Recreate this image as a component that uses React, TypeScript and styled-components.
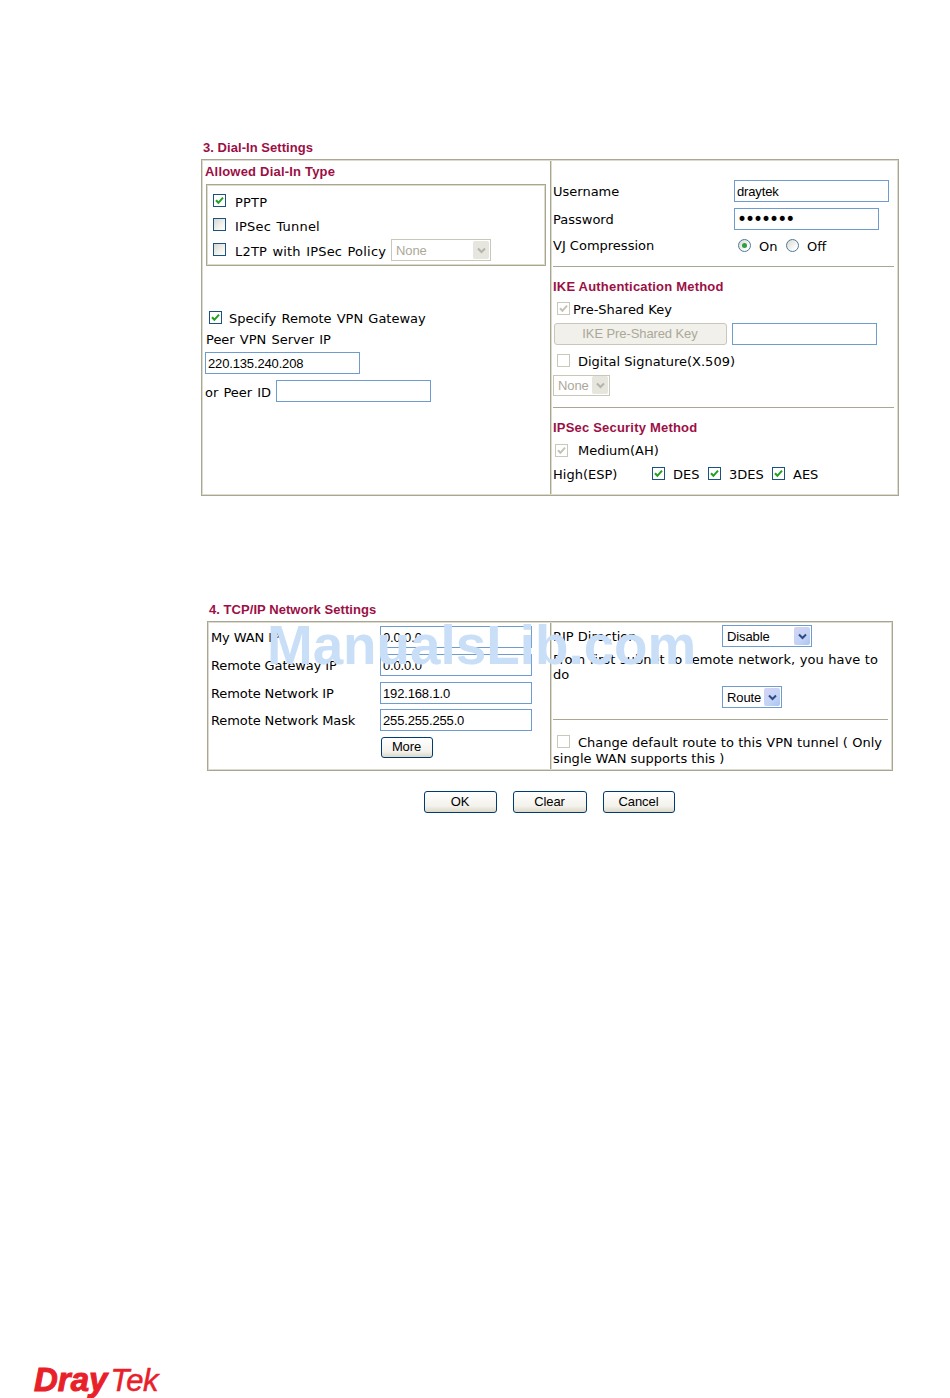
import styled, { createGlobalStyle } from "styled-components";

const GlobalStyle = createGlobalStyle`
  html, body {
    margin: 0;
    padding: 0;
    background: #ffffff;
  }
`;

const labelFont = `"DejaVu Sans", Verdana, sans-serif`;
const fieldFont = `"Liberation Sans", Arial, sans-serif`;
const lineColor = "#a9a78f";

const Page = styled.div`
  position: relative;
  width: 950px;
  height: 1398px;
  overflow: hidden;
  display: flex;
  flex-direction: column;
  padding-top: 138px;
  box-sizing: border-box;
  font-family: ${labelFont};
  font-size: 13px;
  color: #000000;
`;

const Section = styled.section<{ $left: number; $width: number; $top?: number }>`
  margin-left: ${(p) => p.$left}px;
  margin-top: ${(p) => p.$top || 0}px;
  width: ${(p) => p.$width}px;
`;

const Heading = styled.h3<{ $indent: number }>`
  margin: 0 0 2px;
  padding: 1px 0 0 ${(p) => p.$indent}px;
  font: bold 13px/18px ${fieldFont};
  letter-spacing: 0.05px;
  color: #9c0f45;
`;

const Panel = styled.div<{ $height: number; $split: number }>`
  display: grid;
  grid-template-columns: ${(p) => p.$split}px 1fr;
  height: ${(p) => p.$height}px;
  box-sizing: border-box;
  border: 1px solid ${lineColor};
  padding: 1px;
  box-shadow: inset 0 0 0 1px #dcdbd0;
`;

const LeftCell = styled.div`
  box-sizing: border-box;
  border-right: 1px solid ${lineColor};
  box-shadow: 1px 0 0 #dcdbd0;
  word-spacing: 1px;
`;

const RightCell = styled.div`
  padding-left: 2px;
`;

const SubTitle = styled.div<{ $indent?: number; $top?: number }>`
  font: bold 13px/18px ${fieldFont};
  letter-spacing: 0.2px;
  word-spacing: 0;
  color: #9c0f45;
  padding: 2px 0 0 ${(p) => p.$indent || 0}px;
  margin-top: ${(p) => p.$top || 0}px;
`;

const Row = styled.div<{ $h?: number; $top?: number; $indent?: number; $gap?: number }>`
  display: flex;
  align-items: center;
  height: ${(p) => p.$h || 20}px;
  margin-top: ${(p) => p.$top || 0}px;
  padding-left: ${(p) => p.$indent || 0}px;
  gap: ${(p) => p.$gap || 0}px;
  white-space: nowrap;
`;

const TypeBox = styled.div`
  margin: 3px 4px 0 3px;
  height: 82px;
  box-sizing: border-box;
  border: 1px solid ${lineColor};
  box-shadow: inset 0 0 0 1px #dcdbd0;
  padding: 5px 0 0 1px;
  letter-spacing: 0.2px;
`;

const Label = styled.span<{ $width?: number; $pad?: number; $drop?: number }>`
  display: inline-block;
  box-sizing: border-box;
  width: ${(p) => (p.$width ? `${p.$width}px` : "auto")};
  padding-left: ${(p) => p.$pad || 0}px;
  padding-top: ${(p) => p.$drop || 0}px;
`;

const TextInput = styled.input<{ $width: number }>`
  display: block;
  box-sizing: border-box;
  width: ${(p) => p.$width}px;
  height: 22px;
  padding: 0 2px;
  border: 1px solid #6f9ccf;
  border-radius: 0;
  outline: none;
  background: #ffffff;
  font: 13px ${fieldFont};
  letter-spacing: -0.15px;
  color: #000000;
`;

const PasswordInput = styled(TextInput)`
  font: 17px ${labelFont};
  letter-spacing: -2px;
`;

const Box = styled.span<{ $checked?: boolean; $disabled?: boolean; $raise?: number }>`
  flex: none;
  display: inline-flex;
  align-items: center;
  justify-content: center;
  box-sizing: border-box;
  width: 13px;
  height: 13px;
  position: relative;
  top: ${(p) => -(p.$raise || 0)}px;
  border: 1px solid ${(p) => (p.$disabled ? "#cac8bb" : "#1c5180")};
  background: ${(p) =>
    p.$disabled || p.$checked
      ? "#ffffff"
      : "linear-gradient(135deg, #d8d8d2 0%, #f2f2ee 60%, #ffffff 100%)"};
`;

const Radio = styled.span<{ $on?: boolean }>`
  flex: none;
  display: inline-flex;
  align-items: center;
  justify-content: center;
  box-sizing: border-box;
  width: 13px;
  height: 13px;
  border-radius: 50%;
  border: 1px solid #4f7a96;
  background: linear-gradient(135deg, #d8d8d2 0%, #ffffff 80%);
  &::after {
    content: "";
    display: ${(p) => (p.$on ? "block" : "none")};
    width: 5px;
    height: 5px;
    border-radius: 50%;
    background: #2f9e3f;
  }
`;

const SelectBox = styled.div<{ $width: number; $height?: number; $disabled?: boolean; $shift?: number; $lift?: number }>`
  flex: none;
  display: flex;
  align-items: center;
  justify-content: space-between;
  box-sizing: border-box;
  width: ${(p) => p.$width}px;
  height: ${(p) => p.$height || 22}px;
  margin-left: ${(p) => p.$shift || 0}px;
  margin-bottom: ${(p) => p.$lift || 0}px;
  padding: 0 1px 0 4px;
  border: 1px solid ${(p) => (p.$disabled ? "#c9c7ba" : "#6f9ccf")};
  font: 13px ${fieldFont};
  letter-spacing: -0.1px;
  word-spacing: 0;
  color: ${(p) => (p.$disabled ? "#aca899" : "#000000")};
`;

const SelectArrow = styled.span<{ $disabled?: boolean }>`
  display: flex;
  align-items: center;
  justify-content: center;
  width: 16px;
  height: 18px;
  border-radius: 2px;
  background: ${(p) =>
    p.$disabled ? "#e6e5de" : "linear-gradient(135deg, #d6d4f4 0%, #c3d3f6 60%, #a9c4f0 100%)"};
`;

const Rule = styled.hr<{ $top: number }>`
  margin: ${(p) => p.$top}px 3px 0 0;
  border: none;
  border-top: 1px solid ${lineColor};
  height: 0;
`;

const FakeButton = styled.button<{ $width: number; $height?: number; $disabled?: boolean }>`
  flex: none;
  box-sizing: border-box;
  width: ${(p) => p.$width}px;
  height: ${(p) => p.$height || 22}px;
  padding: 0 1px 2px 0;
  border-radius: 3px;
  border: 1px solid ${(p) => (p.$disabled ? "#c9c7ba" : "#003c74")};
  background: ${(p) =>
    p.$disabled ? "#f1f0ea" : "linear-gradient(180deg, #ffffff 0%, #f3f2ec 70%, #dcd8c8 100%)"};
  font: 13px ${fieldFont};
  letter-spacing: -0.1px;
  color: ${(p) => (p.$disabled ? "#aca899" : "#000000")};
`;

const NetRow = styled.div<{ $top?: number }>`
  display: flex;
  align-items: center;
  height: 22px;
  margin-top: ${(p) => p.$top ?? 6}px;
  padding-left: 2px;
  white-space: nowrap;
  letter-spacing: -0.1px;
`;

const NetLeft = styled.div`
  box-sizing: border-box;
  border-right: 1px solid ${lineColor};
  box-shadow: 1px 0 0 #dcdbd0;
  padding-top: 3px;
`;

const Note = styled.p<{ $top?: number }>`
  margin: ${(p) => p.$top || 0}px 0 0;
  width: 329px;
  line-height: 15px;
  word-spacing: 0.5px;
`;

const JustifiedNote = styled.p`
  margin: 15px 0 0;
  width: 329px;
  line-height: 16px;
  text-align: justify;
  & > span:first-child {
    display: inline-block;
    vertical-align: -1px;
    margin: 0 8px 0 4px;
  }
`;

const Actions = styled.div`
  display: flex;
  margin: 20px 0 0 217px;
  gap: 16px;
`;

const Footer = styled.footer`
  margin-top: auto;
  padding-left: 34px;
  height: 36px;
  color: #e8202a;
  line-height: 36px;
  white-space: nowrap;
  font-family: ${fieldFont};
  font-style: italic;
`;

const LogoDray = styled.span`
  font-size: 33px;
  font-weight: bold;
  -webkit-text-stroke: 1px #e8202a;
`;

const LogoTek = styled.span`
  margin-left: 3px;
  font-size: 31px;
  letter-spacing: -0.3px;
  -webkit-text-stroke: 0.5px #e8202a;
`;

const Watermark = styled.div`
  position: absolute;
  left: 267px;
  top: 614px;
  font: bold 54.8px/62px ${fieldFont};
  color: #c9dff8;
  white-space: nowrap;
  pointer-events: none;
`;

const Check = ({ muted }: { muted?: boolean }) => (
  <svg width="9" height="9" viewBox="0 0 9 9" fill="none">
    <path
      d="M1 4.2 L3.4 6.8 L8 1.6"
      stroke={muted ? "#c4c3b8" : "#21a121"}
      strokeWidth="2"
    />
  </svg>
);

const Checkbox = ({ checked, disabled, raise }: { checked?: boolean; disabled?: boolean; raise?: number }) => (
  <Box $checked={checked} $disabled={disabled} $raise={raise}>
    {checked && <Check muted={disabled} />}
  </Box>
);

const Arrow = ({ muted }: { muted?: boolean }) => (
  <svg width="9" height="7" viewBox="0 0 9 7" fill="none">
    <path d="M1 1.5 L4.5 5 L8 1.5" stroke={muted ? "#b5b4aa" : "#2c4a86"} strokeWidth="2" />
  </svg>
);

const Select = (props: { value: string; width: number; height?: number; disabled?: boolean; shift?: number; lift?: number }) => (
  <SelectBox
    $width={props.width}
    $height={props.height}
    $disabled={props.disabled}
    $shift={props.shift}
    $lift={props.lift}
  >
    <span>{props.value}</span>
    <SelectArrow $disabled={props.disabled}>
      <Arrow muted={props.disabled} />
    </SelectArrow>
  </SelectBox>
);

const App = () => {
  return (
    <Page>
      <GlobalStyle />

      <Section $left={201} $width={698}>
        <Heading $indent={2}>3. Dial-In Settings</Heading>
        <Panel $height={337} $split={348}>
          <LeftCell>
            <SubTitle $indent={2}>Allowed Dial-In Type</SubTitle>
            <TypeBox>
              <Row $h={24} $indent={5} $gap={9}>
                <Checkbox checked raise={2} />
                <Label>PPTP</Label>
              </Row>
              <Row $h={24} $indent={5} $gap={9}>
                <Checkbox raise={2} />
                <Label>IPSec Tunnel</Label>
              </Row>
              <Row $h={27} $indent={5} $gap={9}>
                <Checkbox raise={2} />
                <Label $width={151}>L2TP with IPSec Policy</Label>
                <Select value="None" width={100} disabled shift={-4} lift={3} />
              </Row>
            </TypeBox>
            <Row $h={22} $top={41} $indent={6} $gap={7}>
              <Checkbox checked raise={1} />
              <Label>Specify Remote VPN Gateway</Label>
            </Row>
            <Row $indent={3}>
              <Label>Peer VPN Server IP</Label>
            </Row>
            <Row $h={22} $top={3} $indent={2}>
              <TextInput $width={155} readOnly value="220.135.240.208" />
            </Row>
            <Row $h={22} $top={6} $indent={2}>
              <Label $width={71} $drop={3}>or Peer ID</Label>
              <TextInput $width={155} readOnly value="" />
            </Row>
          </LeftCell>

          <RightCell>
            <Row $h={22} $top={19}>
              <Label $width={181}>Username</Label>
              <TextInput $width={155} readOnly value="draytek" />
            </Row>
            <Row $h={22} $top={6}>
              <Label $width={181}>Password</Label>
              <PasswordInput $width={145} readOnly type="password" value="1234567" />
            </Row>
            <Row $top={5}>
              <Label $width={185}>VJ Compression</Label>
              <Radio $on />
              <Label $width={35} $pad={8} $drop={2}>On</Label>
              <Radio />
              <Label $pad={8} $drop={2}>Off</Label>
            </Row>
            <Rule $top={11} />
            <SubTitle $top={9}>IKE Authentication Method</SubTitle>
            <Row $top={3} $indent={4} $gap={3}>
              <Checkbox checked disabled raise={1} />
              <Label>Pre-Shared Key</Label>
            </Row>
            <Row $h={22} $top={4} $indent={1} $gap={5}>
              <FakeButton $width={173} $disabled>
                IKE Pre-Shared Key
              </FakeButton>
              <TextInput $width={145} readOnly value="" />
            </Row>
            <Row $top={6} $indent={4} $gap={8}>
              <Checkbox disabled raise={1} />
              <Label>Digital Signature(X.509)</Label>
            </Row>
            <Row $h={22} $top={3}>
              <Select value="None" width={57} height={21} disabled />
            </Row>
            <Rule $top={11} />
            <SubTitle $top={9}>IPSec Security Method</SubTitle>
            <Row $top={3} $indent={2} $gap={10}>
              <Checkbox checked disabled />
              <Label>Medium(AH)</Label>
            </Row>
            <Row $top={4}>
              <Label $width={99}>High(ESP)</Label>
              <Checkbox checked raise={1} />
              <Label $width={43} $pad={8}>DES</Label>
              <Checkbox checked raise={1} />
              <Label $width={51} $pad={8}>3DES</Label>
              <Checkbox checked raise={1} />
              <Label $pad={8}>AES</Label>
            </Row>
          </RightCell>
        </Panel>
      </Section>

      <Section $left={207} $width={686} $top={104}>
        <Heading $indent={2}>4. TCP/IP Network Settings</Heading>
        <Panel $height={150} $split={342}>
          <NetLeft>
            <NetRow $top={0}>
              <Label $width={169}>My WAN IP</Label>
              <TextInput $width={152} readOnly value="0.0.0.0" />
            </NetRow>
            <NetRow>
              <Label $width={169}>Remote Gateway IP</Label>
              <TextInput $width={152} readOnly value="0.0.0.0" />
            </NetRow>
            <NetRow>
              <Label $width={169}>Remote Network IP</Label>
              <TextInput $width={152} readOnly value="192.168.1.0" />
            </NetRow>
            <NetRow $top={5}>
              <Label $width={169}>Remote Network Mask</Label>
              <TextInput $width={152} readOnly value="255.255.255.0" />
            </NetRow>
            <NetRow $top={5}>
              <Label $width={170} />
              <FakeButton $width={52} $height={21}>
                More
              </FakeButton>
            </NetRow>
          </NetLeft>

          <RightCell>
            <Row $h={22} $top={2}>
              <Label $width={169}>RIP Direction</Label>
              <Select value="Disable" width={90} />
            </Row>
            <Note $top={5}>From first subnet to remote network, you have to do</Note>
            <Row $h={22} $top={4}>
              <Select value="Route" width={60} shift={169} />
            </Row>
            <Rule $top={11} />
            <JustifiedNote>
              <Checkbox disabled />
              Change default route to this VPN tunnel ( Only single WAN supports this )
            </JustifiedNote>
          </RightCell>
        </Panel>
        <Actions>
          <FakeButton $width={73}>OK</FakeButton>
          <FakeButton $width={74}>Clear</FakeButton>
          <FakeButton $width={72}>Cancel</FakeButton>
        </Actions>
      </Section>

      <Footer>
        <LogoDray>Dray</LogoDray>
        <LogoTek>Tek</LogoTek>
      </Footer>

      <Watermark>ManualsLib.com</Watermark>
    </Page>
  );
};

export default App;
